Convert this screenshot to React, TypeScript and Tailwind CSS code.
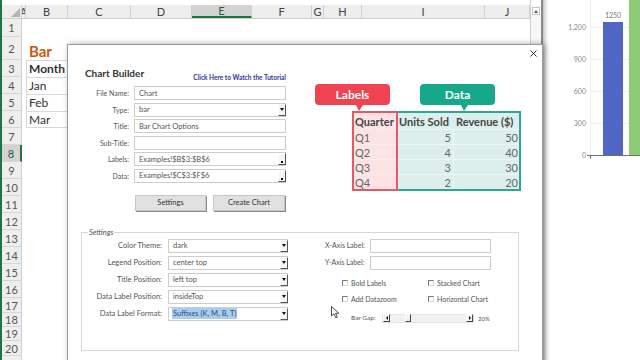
import React from 'react';

// column widths of the sheet behind the dialog
const COLS: { key: string; w: string }[] = [
  { key: 'A', w: 'w-[4px]' },
  { key: 'B', w: 'w-[42px]' },
  { key: 'C', w: 'w-[63px]' },
  { key: 'D', w: 'w-[61px]' },
  { key: 'E', w: 'w-[60px]' },
  { key: 'F', w: 'w-[60px]' },
  { key: 'G', w: 'w-[12px]' },
  { key: 'H', w: 'w-[38px]' },
  { key: 'I', w: 'w-[123px]' },
  { key: 'J', w: 'w-[45px]' },
];

const ROWS: { n: number; h: string }[] = [
  { n: 1, h: 'h-[18px]' },
  { n: 2, h: 'h-[23px]' },
  ...Array.from({ length: 14 }, (_, i) => ({ n: i + 3, h: 'h-[17px]' })),
  { n: 17, h: 'h-[15px]' },
  { n: 18, h: 'h-[14px]' },
  { n: 19, h: 'h-[14px]' },
  { n: 20, h: 'h-[15px]' },
  { n: 21, h: 'h-[15px]' },
];

const MONTHS: Record<number, string> = { 4: 'Jan', 5: 'Feb', 6: 'Mar' };

function CellB({ n }: { n: number }) {
  if (n === 2) {
    return (
      <div className="w-[42px] flex items-end pl-[3px] pb-[1px] text-[15px] font-bold text-[#c55a11] leading-none">
        Bar
      </div>
    );
  }
  if (n >= 3 && n <= 6) {
    return (
      <div
        className={`w-[42px] flex items-center pl-[2px] border-t border-l border-[#d9d9d9] text-[12px] text-[#333] ${
          n === 3 ? 'font-bold' : ''
        } ${n === 6 ? 'border-b' : ''}`}
      >
        {n === 3 ? 'Month' : MONTHS[n]}
      </div>
    );
  }
  return <div className="w-[42px]" />;
}

function Sheet() {
  return (
    <div className="flex w-[543px] h-[360px] shrink-0 border-l-2 border-r-2 border-l-[#217346] border-r-[#8a8a8a] bg-white">
      <div className="w-[528px] flex flex-col overflow-hidden">
        <div className="h-[5px] shrink-0" />
        {/* column headers */}
        <div className="flex h-[14px] shrink-0 bg-[#eeeeee] border-b border-[#cfcfcf]">
          <div className="w-[20px] flex items-end justify-end pr-[1px] pb-[1px] border-r border-[#cfcfcf]">
            <svg width="9" height="9">
              <polygon points="9,0 9,9 0,9" fill="#b4b4b4" />
            </svg>
          </div>
          {COLS.map((c) => (
            <div
              key={c.key}
              className={`${c.w} shrink-0 flex items-center justify-center overflow-hidden text-[11px] leading-none border-r border-[#d2d2d2] ${
                c.key === 'E' ? 'bg-[#d3d3d3] text-[#1f5f3b] border-b-2 border-b-[#217346]' : 'text-[#444]'
              }`}
            >
              {c.key}
            </div>
          ))}
        </div>
        {ROWS.map((r) => (
          <div key={r.n} className={`flex shrink-0 ${r.h}`}>
            <div
              className={`w-[20px] shrink-0 flex items-center justify-center text-[11px] leading-none border-b border-[#d6d6d6] ${
                r.n === 8
                  ? 'bg-[#d3d3d3] text-[#1f5f3b] border-r-2 border-r-[#217346]'
                  : 'bg-[#eeeeee] text-[#555] border-r border-r-[#cfcfcf]'
              }`}
            >
              {r.n}
            </div>
            <div className="w-[4px]" />
            <CellB n={r.n} />
            <div className="flex-1" />
          </div>
        ))}
      </div>
      {/* vertical scroll bar */}
      <div className="w-[11px] flex flex-col border-l border-[#d0d0d0]">
        <div className="h-[5px] bg-white" />
        <div className="flex-1 bg-[#f7f7f7] pt-[2px] flex flex-col items-center">
          <div className="w-[8px] h-[8px] border border-[#c8c8c8] bg-white flex items-center justify-center">
            <svg width="4" height="3">
              <polygon points="2,0 4,3 0,3" fill="#555" />
            </svg>
          </div>
        </div>
      </div>
    </div>
  );
}

function Chart() {
  const ticks = [
    { v: '1,200', y: 27 },
    { v: '900', y: 59 },
    { v: '600', y: 91 },
    { v: '300', y: 123 },
    { v: '0', y: 155 },
  ];
  return (
    <div className="flex-1 bg-white">
      <svg width="97" height="360" className="block">
        <defs>
          <linearGradient id="shade" x1="0" x2="1" y1="0" y2="0">
            <stop offset="0" stopColor="#8c8c8c" stopOpacity="0.55" />
            <stop offset="1" stopColor="#ffffff" stopOpacity="0" />
          </linearGradient>
        </defs>
        <rect x="0" y="0" width="7" height="360" fill="url(#shade)" />
        <line x1="47.5" y1="0" x2="47.5" y2="155" stroke="#eceef3" />
        {ticks.map((t) => (
          <g key={t.v}>
            {t.y !== 155 && <line x1="47" y1={t.y + 0.5} x2="97" y2={t.y + 0.5} stroke="#eceef3" />}
            <text
              x="43"
              y={t.y + 2.5}
              textAnchor="end"
              fontSize="7"
              fill="#8a8a8a"
              fontFamily="Lato, sans-serif"
            >
              {t.v}
            </text>
          </g>
        ))}
        <rect x="60" y="22" width="20" height="133" fill="#5166c4" />
        <text x="70" y="18" textAnchor="middle" fontSize="7" fill="#777" fontFamily="Lato, sans-serif">
          1250
        </text>
        <rect x="86" y="0" width="11" height="155" fill="#8fca76" />
        <line x1="44" y1="155.5" x2="97" y2="155.5" stroke="#6e7079" />
        <line x1="47.5" y1="155" x2="47.5" y2="159" stroke="#6e7079" />
      </svg>
    </div>
  );
}

function DropBtn() {
  return (
    <div className="ml-auto mr-[-1px] w-[8px] h-[12px] shrink-0 bg-[#f4f4f4] border-l border-t border-l-white border-t-white border-r border-b border-r-[#555] border-b-[#555] flex items-center justify-center">
      <svg width="4" height="3">
        <polygon points="0,0 4,0 2,3" fill="#111" />
      </svg>
    </div>
  );
}

function RangeBtn() {
  return (
    <div className="ml-auto mr-[-1px] w-[8px] h-[12px] shrink-0 bg-[#f4f4f4] border-l border-t border-l-white border-t-white border-r border-b border-r-[#555] border-b-[#555] flex items-end pl-[2px] pb-[1px]">
      <div className="w-[2px] h-[2px] bg-[#111]" />
    </div>
  );
}

function Box({
  value,
  kind,
  w,
  highlight,
}: {
  value?: string;
  kind?: 'select' | 'range';
  w: string;
  highlight?: boolean;
}) {
  return (
    <div className={`${w} h-[14px] shrink-0 flex items-center border border-[#cdcdcd] bg-white pl-[4px] text-[7.5px] text-[#555]`}>
      <span className={highlight ? 'bg-[#a8cdf0] text-[#2c4f78] px-[1px] -ml-[1px]' : ''}>{value}</span>
      {kind === 'select' && <DropBtn />}
      {kind === 'range' && <RangeBtn />}
    </div>
  );
}

const FIELDS: { label: string; value: string; kind?: 'select' | 'range' }[] = [
  { label: 'File Name:', value: 'Chart' },
  { label: 'Type:', value: 'bar', kind: 'select' },
  { label: 'Title:', value: 'Bar Chart Options' },
  { label: 'Sub-Title:', value: '' },
  { label: 'Labels:', value: 'Examples!$B$3:$B$6', kind: 'range' },
  { label: 'Data:', value: 'Examples!$C$3:$F$6', kind: 'range' },
];

const SETTINGS: { label: string; value: string; highlight?: boolean }[] = [
  { label: 'Color Theme:', value: 'dark' },
  { label: 'Legend Position:', value: 'center top' },
  { label: 'Title Position:', value: 'left top' },
  { label: 'Data Label Position:', value: 'insideTop' },
  { label: 'Data Label Format:', value: 'Suffixes (K, M, B, T)', highlight: true },
];

const TABLE = [
  { q: 'Q1', u: '5', r: '50' },
  { q: 'Q2', u: '4', r: '40' },
  { q: 'Q3', u: '3', r: '30' },
  { q: 'Q4', u: '2', r: '20' },
];

function Callout({ text, color }: { text: string; color: string }) {
  return (
    <div className={`relative w-[75px] h-[21px] rounded-[4px] ${color} flex items-center justify-center text-white text-[12px] font-bold`}>
      {text}
      <svg width="7" height="6" className="absolute left-[41px] top-[21px]">
        <polygon points="0,0 7,0 3,6" className={color === 'bg-[#ef4352]' ? 'fill-[#ef4352]' : 'fill-[#16a88a]'} />
      </svg>
    </div>
  );
}

function Check({ label }: { label: string }) {
  return (
    <div className="flex items-center h-[16px]">
      <div className="w-[6px] h-[6px] bg-white border border-t-[#7a7a7a] border-l-[#7a7a7a] border-r-[#d9d9d9] border-b-[#d9d9d9]" />
      <span className="ml-[3px] text-[7px] text-[#555]">{label}</span>
    </div>
  );
}

function ScrollBtn({ dir }: { dir: 'l' | 'r' }) {
  return (
    <div className="w-[7px] h-[8px] shrink-0 bg-[#f2f2f2] border border-t-white border-l-white border-r-[#444] border-b-[#444] flex items-center justify-center">
      <svg width="2" height="4">
        <polygon points={dir === 'l' ? '2,0 2,4 0,2' : '0,0 0,4 2,2'} fill="#111" />
      </svg>
    </div>
  );
}

function Dialog() {
  return (
    <div className="absolute left-[67px] top-[44px] w-[476px] h-[330px] bg-white border border-[#9c9c9c] shadow-[2px_0_6px_rgba(0,0,0,0.35)]">
      <svg width="7" height="7" className="absolute right-[5px] top-[5px]">
        <line x1="0.5" y1="0.5" x2="6.5" y2="6.5" stroke="#333" strokeWidth="1" />
        <line x1="6.5" y1="0.5" x2="0.5" y2="6.5" stroke="#333" strokeWidth="1" />
      </svg>

      <div className="flex pl-[17px] pt-[21px]">
        {/* form */}
        <div className="w-[201px]">
          <div className="flex items-end justify-between h-[12px]">
            <span className="text-[10px] font-bold text-[#333] leading-none">Chart Builder</span>
            <span className="text-[6.5px] font-bold text-[#3030a8] leading-none translate-y-[3px]">
              Click Here to Watch the Tutorial
            </span>
          </div>
          <div className="mt-[7px]">
            {FIELDS.map((f) => (
              <div key={f.label} className="flex items-center h-[16.5px]">
                <div className="w-[44px] text-right text-[7px] text-[#555]">{f.label}</div>
                <div className="ml-[5px]">
                  <Box value={f.value} kind={f.kind} w="w-[152px]" />
                </div>
              </div>
            ))}
          </div>
          <div className="flex gap-[7px] pl-[50px] mt-[11px]">
            <button className="w-[71px] h-[16px] bg-[#e1e1e1] border border-[#c6c6c6] shadow-[1px_1px_0_#8a8a8a] text-[7.5px] text-[#333]">
              Settings
            </button>
            <button className="w-[72px] h-[16px] bg-[#e1e1e1] border border-[#c6c6c6] shadow-[1px_1px_0_#8a8a8a] text-[7.5px] text-[#333]">
              Create Chart
            </button>
          </div>
        </div>

        {/* labels / data picture */}
        <div className="ml-[29px] pt-[18px]">
          <div className="flex gap-[30px]">
            <Callout text="Labels" color="bg-[#ef4352]" />
            <Callout text="Data" color="bg-[#16a88a]" />
          </div>
          <div className="flex ml-[37px] mt-[6px] text-[11px] text-[#666] leading-none">
            <div className="w-[46px] border-2 border-[#e05a69] bg-[#fde3e4]">
              <div className="h-[16px] flex items-center pl-[1px] font-bold text-[#444]">Quarter</div>
              {TABLE.map((t) => (
                <div key={t.q} className="h-[15px] flex items-center pl-[1px] border-t border-[#f6eeee]">
                  {t.q}
                </div>
              ))}
            </div>
            <div className="w-[123px] border-2 border-l-0 border-[#2ea896] bg-[#ddefec]">
              <div className="h-[16px] flex items-center font-bold text-[#444]">
                <div className="w-[56px] pl-[1px]">Units Sold</div>
                <div className="flex-1 pl-[2px]">Revenue ($)</div>
              </div>
              {TABLE.map((t) => (
                <div key={t.q} className="h-[15px] flex items-center border-t border-[#eef6f5]">
                  <div className="w-[56px] text-right pr-[2px] border-r border-[#eef6f5] h-full flex items-center justify-end">
                    {t.u}
                  </div>
                  <div className="flex-1 text-right pr-[1px]">{t.r}</div>
                </div>
              ))}
            </div>
          </div>
        </div>
      </div>

      {/* settings group */}
      <fieldset className="ml-[13px] mt-[17px] w-[438px] h-[123px] border border-[#d6d6d6]">
        <legend className="ml-[6px] px-[1px] text-[7.5px] italic text-[#555] leading-[9px]">Settings</legend>
        <div className="flex">
          <div>
            {SETTINGS.map((s) => (
              <div key={s.label} className="flex items-center h-[17px]">
                <div className="w-[80px] text-right text-[7.5px] text-[#555]">{s.label}</div>
                <div className="ml-[6px]">
                  <Box value={s.value} kind="select" w="w-[120px]" highlight={s.highlight} />
                </div>
              </div>
            ))}
          </div>
          <div className="ml-[37px]">
            <div className="flex items-center h-[17px]">
              <div className="w-[45px] text-[7px] text-[#555]">X-Axis Label:</div>
              <Box w="w-[121px]" />
            </div>
            <div className="flex items-center h-[17px]">
              <div className="w-[45px] text-[7px] text-[#555]">Y-Axis Label:</div>
              <Box w="w-[121px]" />
            </div>
            <div className="mt-[4px] ml-[17px] grid grid-cols-[86px_auto]">
              <Check label="Bold Labels" />
              <Check label="Stacked Chart" />
              <Check label="Add Datazoom" />
              <Check label="Horizontal Chart" />
            </div>
            <div className="mt-[3px] ml-[26px] flex items-center h-[16px]">
              <div className="w-[31px] text-[6.5px] text-[#555]">Bar Gap:</div>
              <div className="w-[92px] h-[9px] flex items-center bg-[#f1f1f1] border border-[#e4e4e4]">
                <ScrollBtn dir="l" />
                <div className="ml-[15px] w-[6px] h-[8px] bg-[#f2f2f2] border border-t-white border-l-white border-r-[#444] border-b-[#444]" />
                <div className="flex-1" />
                <ScrollBtn dir="r" />
              </div>
              <div className="ml-[4px] text-[6px] text-[#555]">20%</div>
            </div>
          </div>
        </div>
      </fieldset>
    </div>
  );
}

export default function App() {
  return (
    <div className="relative w-[640px] h-[360px] overflow-hidden flex bg-white font-['Lato',sans-serif]">
      <Sheet />
      <Chart />
      <Dialog />
      {/* mouse pointer */}
      <svg width="9" height="13" className="absolute left-[331px] top-[306px]">
        <path d="M0.5 0.5 L0.5 10 L3 7.8 L4.8 11.8 L6.3 11.1 L4.6 7.2 L7.8 7.2 Z" fill="#fff" stroke="#222" strokeWidth="0.8" />
      </svg>
    </div>
  );
}
